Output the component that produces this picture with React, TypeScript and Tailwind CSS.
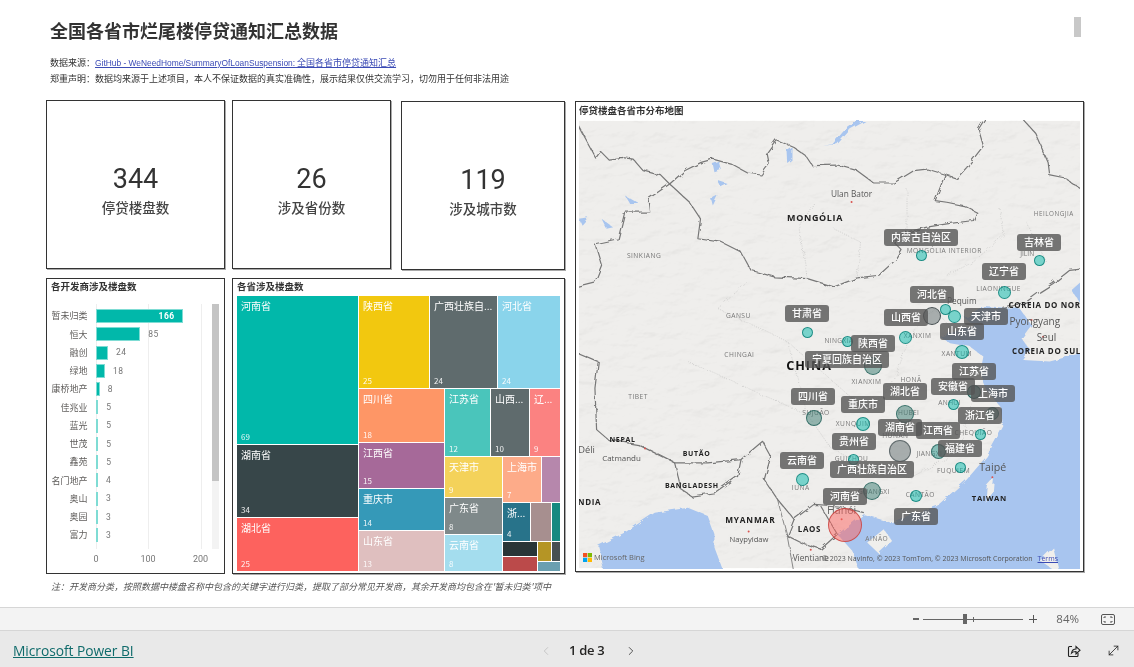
import React from "react";
import { ChevronLeft, ChevronRight, MoveDiagonal } from "lucide-react";

const FONT = "font-['Noto_Sans_CJK_SC','Noto_Sans',sans-serif]";

const bars: [string, number][] = [
  ["暂未归类", 166], ["恒大", 85], ["融创", 24], ["绿地", 18], ["康桥地产", 8], ["佳兆业", 5], ["蓝光", 5],
  ["世茂", 5], ["鑫苑", 5], ["名门地产", 4], ["奥山", 3], ["奥园", 3], ["富力", 3],
];

function Stat({ value, label, className }: { value: string; label: string; className: string }) {
  return (
    <div className={`${className} h-[169px] border border-[#333] shadow-[1px_1px_0_#aaa] flex flex-col items-center justify-center pt-[10px]`}>
      <div className="font-['Roboto',sans-serif] text-[27px] leading-[34px] text-[#333]">{value}</div>
      <div className="text-[13.5px] leading-[22px] font-medium text-[#444]">{label}</div>
    </div>
  );
}

function Cell({ bg, name, value, className = "" }: { bg: string; name?: string; value?: number; className?: string }) {
  return (
    <div className={`${bg} ${className} min-w-0 min-h-0 flex flex-col justify-between pl-[4px] pr-[2px] pt-[3px] pb-[2px] overflow-hidden text-white`}>
      {name && <div className="text-[10px] leading-[14px] whitespace-nowrap">{name}</div>}
      {value !== undefined && <div className="text-[8px] leading-[11px] opacity-90">{value}</div>}
    </div>
  );
}

function Treemap() {
  return (
    <div className="mx-[4px] mt-[3px] h-[275px] flex gap-px">
      <div className="w-[121px] flex flex-col gap-px">
        <Cell bg="bg-[#01b8aa]" name="河南省" value={69} className="h-[148px]" />
        <Cell bg="bg-[#374649]" name="湖南省" value={34} className="h-[72px]" />
        <Cell bg="bg-[#fd625e]" name="湖北省" value={25} className="flex-1" />
      </div>
      <div className="flex-1 flex flex-col gap-px">
        <div className="h-[92px] flex gap-px">
          <Cell bg="bg-[#f2c80f]" name="陕西省" value={25} className="w-[70px]" />
          <Cell bg="bg-[#5f6b6d]" name="广西壮族自..." value={24} className="w-[67px]" />
          <Cell bg="bg-[#8ad4eb]" name="河北省" value={24} className="flex-1" />
        </div>
        <div className="flex-1 flex gap-px min-h-0">
          <div className="w-[85px] flex flex-col gap-px">
            <Cell bg="bg-[#fe9666]" name="四川省" value={18} className="h-[53px]" />
            <Cell bg="bg-[#a66999]" name="江西省" value={15} className="h-[45px]" />
            <Cell bg="bg-[#3599b8]" name="重庆市" value={14} className="h-[41px]" />
            <Cell bg="bg-[#dfbfbf]" name="山东省" value={13} className="flex-1" />
          </div>
          <div className="flex-1 flex flex-col gap-px">
            <div className="h-[67px] flex gap-px">
              <Cell bg="bg-[#4ac5bb]" name="江苏省" value={12} className="w-[45px]" />
              <Cell bg="bg-[#5f6b6d]" name="山西..." value={10} className="w-[38px]" />
              <Cell bg="bg-[#fb8281]" name="辽..." value={9} className="flex-1" />
            </div>
            <div className="flex-1 flex gap-px min-h-0">
              <div className="w-[57px] flex flex-col gap-px">
                <Cell bg="bg-[#f4d25a]" name="天津市" value={9} className="h-[40px]" />
                <Cell bg="bg-[#7f898a]" name="广东省" value={8} className="h-[36px]" />
                <Cell bg="bg-[#a4ddee]" name="云南省" value={8} className="flex-1" />
              </div>
              <div className="flex-1 flex flex-col gap-px">
                <div className="h-[45px] flex gap-px">
                  <Cell bg="bg-[#fdab89]" name="上海市" value={7} className="w-[38px]" />
                  <Cell bg="bg-[#b687ac]" className="flex-1" />
                </div>
                <div className="h-[38px] flex gap-px">
                  <Cell bg="bg-[#28738a]" name="浙..." value={4} className="w-[27px]" />
                  <Cell bg="bg-[#a78f8f]" className="w-[20px]" />
                  <Cell bg="bg-[#168980]" className="flex-1" />
                </div>
                <div className="flex-1 flex gap-px">
                  <div className="w-[34px] flex flex-col gap-px">
                    <Cell bg="bg-[#293537]" className="flex-1" />
                    <Cell bg="bg-[#bb4a4a]" className="flex-1" />
                  </div>
                  <div className="flex-1 flex flex-col gap-px">
                    <div className="h-[19px] flex gap-px">
                      <Cell bg="bg-[#b59525]" className="w-[13px]" />
                      <Cell bg="bg-[#475052]" className="flex-1" />
                    </div>
                    <Cell bg="bg-[#6a9fb0]" className="flex-1" />
                  </div>
                </div>
              </div>
            </div>
          </div>
        </div>
      </div>
    </div>
  );
}

function BarChart() {
  return (
    <div className="relative h-[245px] mt-[11px]">
      {[44.5, 97, 149.5].map((x) => (
        <div key={x} className="absolute top-0 bottom-0 w-px bg-[#eeeeee]" style={{ left: x }} />
      ))}
      <div className="absolute left-[161px] top-0 bottom-0 w-[7px] bg-[#f3f3f3]">
        <div className="h-[177px] bg-[#c4c4c4]" />
      </div>
      <div className="relative pt-[3px]">
        {bars.map(([name, v]) => (
          <div key={name} className="h-[18.25px] flex items-center">
            <div className="w-[36.5px] text-[9px] text-[#605e5c] whitespace-nowrap shrink-0 flex justify-end">{name}</div>
            <div className="ml-[8px] flex items-center">
              <div
                className="h-[14px] bg-[#01b8aa] border border-[#7fdcd4] flex items-center justify-end shrink-0"
                style={{ width: Math.max(2.5, v * 0.525) }}
              >
                {v > 100 && <span className="text-white font-bold text-[8.5px] pr-[7px] tracking-[0.5px] font-['Roboto',sans-serif]">{v}</span>}
              </div>
              {v <= 100 && <span className="ml-[8px] text-[#777] text-[8.5px] tracking-[0.5px] font-['Roboto',sans-serif]">{v}</span>}
            </div>
          </div>
        ))}
      </div>
      <div className="absolute left-0 right-0 top-[249px] text-[9px] text-[#777] font-['Roboto',sans-serif]">
        {[["0", 45], ["100", 97], ["200", 149.5]].map(([t, x]) => (
          <span key={t as string} className="absolute -translate-x-1/2" style={{ left: x as number }}>{t}</span>
        ))}
      </div>
    </div>
  );
}

const pins: [string, number, number, number][] = [
  ["内蒙古自治区", 921, 237, 74], ["吉林省", 1039, 242, 44], ["辽宁省", 1004, 271, 44], ["河北省", 932, 294, 44],
  ["甘肃省", 807, 313, 44], ["山西省", 906, 317, 44], ["天津市", 986, 316, 44], ["山东省", 962, 331, 44],
  ["陕西省", 873, 343, 44], ["宁夏回族自治区", 847, 359, 84], ["江苏省", 974, 371, 44], ["安徽省", 953, 386, 44],
  ["湖北省", 905, 391, 44], ["四川省", 813, 396, 44], ["上海市", 993, 393, 44], ["重庆市", 863, 404, 44],
  ["浙江省", 980, 415, 44], ["湖南省", 900, 427, 44], ["江西省", 938, 430, 44], ["贵州省", 854, 441, 44],
  ["福建省", 960, 448, 44], ["云南省", 802, 460, 44], ["广西壮族自治区", 872, 469, 84], ["河南省", 845, 496, 44],
  ["广东省", 916, 516, 44],
];

const T = "#01b8aa";
const TS = "#067d74";
const G = "#38796f";
const GS = "#1f5f58";
const bubbles: [number, number, number, string, string][] = [
  [921, 255, 5.5, T, TS], [1039, 260, 5.5, T, TS], [1004, 292, 6.5, T, TS],
  [932, 316, 9, "#5f6b6d", "#2f3a3c"], [945, 309, 5.5, T, TS], [954, 316, 6.5, T, TS],
  [807, 332, 5.5, T, TS], [905, 337, 6.5, T, TS], [847, 341, 5.5, T, TS],
  [962, 352, 7, T, TS], [873, 366, 9, G, GS], [974, 392, 7, "#0a5d56", "#0a4a44"],
  [953, 404, 5.5, T, TS], [992, 413, 6.5, "#0a5d56", "#0a4a44"], [905, 414, 9, G, GS],
  [814, 418, 8, G, GS], [863, 424, 7, T, TS], [980, 434, 5.5, T, TS],
  [900, 451, 11, "#5f6b6d", "#4f5a5c"], [938, 451, 7.5, "#1f8f85", GS], [853, 459, 5.5, T, TS],
  [960, 467, 5.5, T, TS], [802, 479, 6.5, T, TS], [872, 491, 9, G, GS],
  [916, 496, 6, T, TS], [845, 525, 17, "#fd625e", "#c8403c"],
];

const mapTexts: [string, number, number, number, string, boolean?, number?][] = [
  ["Ulan Bator", 833, 303, 25, "#555"], ["MONGÓLIA", 723, 378, 27, "#222", true, 2], ["HEILONGJIA", 1442, 361, 19, "#777", false, 1.5],
  ["SINKIANG", 208, 488, 20, "#777", false, 1.5], ["MONGÓLIA INTERIOR", 1112, 472, 20, "#777", false, 1.5], ["JILIN", 1362, 481, 20, "#777"],
  ["LIAONINGUE", 1276, 586, 20, "#777", false, 1.5], ["Pequim", 1165, 627, 25, "#555"], ["COREIA DO NORTE", 1430, 640, 24, "#222", true, 2],
  ["Pyongyang", 1385, 690, 30, "#555"], ["Seul", 1420, 738, 30, "#555"], ["COREIA DO SUL", 1420, 777, 24, "#222", true, 2],
  ["GANSU", 492, 670, 20, "#777", false, 1.5], ["XANXIM", 1032, 730, 20, "#777", false, 1.5], ["NINGXIA", 795, 745, 20, "#777", false, 1],
  ["XANTUM", 1150, 783, 20, "#777", false, 1.5], ["CHINGAI", 495, 786, 20, "#777", false, 1.5], ["CHINA", 705, 825, 38, "#111", true, 3],
  ["XIANXIM", 878, 868, 20, "#777", false, 1.5], ["HONÃ", 1012, 862, 20, "#777", false, 1.5], ["TIBET", 190, 912, 20, "#777", false, 1.5],
  ["SUJUÃO", 726, 962, 20, "#777", false, 1.5], ["ANHUI", 1128, 930, 20, "#777", false, 1], ["HUBEI", 1005, 960, 20, "#777", false, 1],
  ["XUNQUIM", 838, 993, 20, "#777", false, 1.5], ["HUNAN", 965, 1030, 20, "#777", false, 1.5], ["CHEQUIÃO", 1200, 1020, 20, "#777", false, 1.5],
  ["Déli", 35, 1075, 28, "#555"], ["NEPAL", 143, 1043, 21, "#222", true, 2], ["Catmandu", 140, 1100, 24, "#555"], ["BUTÃO", 366, 1083, 21, "#222", true, 2],
  ["GUIZHOU", 833, 1098, 20, "#777", false, 1.5], ["JIANGXI", 1067, 1083, 20, "#777", false, 1], ["FUQUIEM", 1140, 1135, 20, "#777", false, 1.5],
  ["Taipé", 1258, 1130, 32, "#555"], ["BANGLADESH", 352, 1180, 21, "#222", true, 2], ["TAIWAN", 1248, 1220, 23, "#222", true, 2],
  ["IUNÃ", 680, 1186, 20, "#777", false, 1.5], ["GUANGXI", 900, 1200, 20, "#777", false, 1], ["CANTÃO", 1040, 1207, 20, "#777", false, 1.5],
  ["NDIA", 44, 1231, 24, "#222", true, 2], ["Hanói", 803, 1258, 32, "#666"], ["MYANMAR", 528, 1287, 25, "#222", true, 2.5],
  ["LAOS", 706, 1313, 24, "#222", true, 2], ["AINÃO", 909, 1340, 20, "#777", false, 1.5], ["Naypyidaw", 524, 1344, 23, "#555"],
  ["Vientiane", 710, 1402, 25, "#555"],
];

function MapArt() {
  return (
    <svg viewBox="12 75 1509 1347" className="absolute inset-0 w-full h-full" fontFamily="'Open Sans',sans-serif">
      <defs>
        <filter id="relief" x="0" y="0" width="100%" height="100%">
          <feTurbulence type="fractalNoise" baseFrequency="0.012 0.022" numOctaves="6" seed="11" />
          <feDiffuseLighting surfaceScale="5" lightingColor="#ffffff" diffuseConstant="1.1">
            <feDistantLight azimuth="235" elevation="65" />
          </feDiffuseLighting>
        </filter>
        <filter id="rough" x="-5%" y="-5%" width="110%" height="110%">
          <feTurbulence type="fractalNoise" baseFrequency="0.035" numOctaves="3" seed="4" result="n" />
          <feDisplacementMap in="SourceGraphic" in2="n" scale="16" />
        </filter>
      </defs>
      <rect x="12" y="75" width="1509" height="1347" fill="#efeeec" />
      <rect x="12" y="75" width="1509" height="1347" filter="url(#relief)" opacity="0.4" style={{ mixBlendMode: "multiply" }} />
      <g filter="url(#rough)">
        <path fill="#a8c5ef" d="M1195,655 L1225,635 L1290,640 L1340,640 L1375,690 L1345,730 L1372,765 L1350,795 L1430,800 L1540,770 L1540,1440 L860,1440 L835,1370 L790,1320 L870,1260 L950,1285 L1000,1265 L1090,1235 L1180,1155 L1240,1085 L1290,995 L1280,935 L1240,885 L1220,835 L1230,785 L1190,755 L1130,745 L1100,725 L1200,690 L1170,665 Z" />
        <path fill="#a8c5ef" d="M1540,545 L1495,585 L1540,650 Z" />
        <path fill="#a8c5ef" d="M90,1440 L70,1355 L150,1315 L240,1255 L340,1240 L400,1265 L420,1320 L420,1360 L450,1440 Z" />
        <path fill="#f0efec" d="M880,1345 L930,1305 L955,1340 L915,1378 Z" />
        <path fill="#f0efec" d="M1240,1175 L1262,1150 L1258,1195 L1236,1225 Z" />
        <path fill="#f0efec" d="M1400,1400 L1440,1360 L1460,1440 Z" />
        <path fill="#a8c5ef" d="M745,150 L790,145 L830,100 L875,75 L850,75 L810,105 L775,145 Z" />
        <path fill="#a8c5ef" d="M640,165 L655,155 L655,195 L642,205 Z M415,205 L435,198 L442,222 L420,230 Z M430,255 L460,265 L440,275 Z M150,300 L195,325 L165,325 Z M80,370 L115,395 L95,400 Z M12,370 L40,365 L20,388 Z M410,310 L430,300 L415,330 Z" />
        <g fill="none" stroke="#777777" strokeWidth="3.6" strokeLinejoin="round">
          <path d="M285,265 L330,225 L380,200 L415,190 L470,205 L520,232 L560,238 L585,205 L578,170 L605,132 L660,155 L695,180 L715,210 L790,208 L850,225 L900,262 L960,262 L1020,225 L1060,220 L1110,235 L1150,248 L1180,215 L1230,150 L1215,100 L1240,60" />
          <path d="M285,265 L345,320 L378,370 L370,430 L440,440 L500,470 L530,525 L600,545 L700,550 L780,575 L850,548 L915,540 L970,490 L985,465 L960,440 L1000,410 L1060,395 L1120,385 L1200,375 L1210,350 L1170,330 L1120,320 L1085,315 L1115,235" />
          <path d="M1340,60 L1385,110 L1425,200 L1430,240 L1480,250 L1540,290" />
          <path d="M1540,520 L1490,525 L1440,565 L1400,590 L1360,620 L1290,640" />
          <path d="M0,70 L65,190 L80,170 L100,190 L140,185 L175,190 L205,225 L260,240 L285,265 L220,310 L225,350 L150,350 L130,430 L60,445 L80,510 L60,560 L0,575" />
          <path d="M0,770 L70,800 L60,880 L65,1005 L100,1035 L190,1050 L240,1075 L300,1105 L400,1105 L500,1095 L565,1040 L590,1085 L570,1155 L610,1215 L660,1275 L720,1230 L790,1235 L870,1255" />
          <path d="M300,1105 L320,1185 L350,1205 L420,1195 L490,1145 L500,1095" />
          <path d="M660,1275 L640,1325 L680,1345 L740,1365 L790,1320 L740,1235" />
          <path d="M610,1215 L640,1330 L660,1440" strokeWidth="2.6" />
        </g>
        <g fill="none" stroke="#b5b5b5" strokeWidth="1.6" strokeDasharray="3 4">
          <path d="M700,550 L675,400 L720,320 M850,548 L860,440 L780,400 M1000,410 L1000,280 M1120,540 L1200,500 L1290,420 L1280,340 M1420,500 L1360,380 M1170,740 L1080,640 L1010,720 L960,860 L880,950 L800,880 L640,740 L430,640 L520,560 M640,740 L700,960 L770,1060 L880,1120 L1010,1150 L1160,1070 L1190,920 M340,800 L520,880 L700,960" />
        </g>
      </g>
      <g fill="#d9534f"><circle cx="833" cy="319" r="3" /><circle cx="1375" cy="675" r="3" /><circle cx="1410" cy="725" r="3" /><circle cx="211" cy="1062" r="3" /><circle cx="523" cy="1312" r="3" /><circle cx="710" cy="1367" r="3" /><circle cx="1257" cy="1148" r="3" /><circle cx="803" cy="1275" r="3" /></g>
      {mapTexts.map(([t, x, y, s, c, b, ls]) => (
        <text key={t} x={x} y={y} fontSize={s} fill={c} fontWeight={b ? 700 : 400} letterSpacing={ls ?? 0} textAnchor="middle">{t}</text>
      ))}
    </svg>
  );
}

function MapVisual() {
  const ox = 579;
  const oy = 120;
  return (
    <div className="relative flex-1 mx-[3px] mb-[2px] overflow-hidden">
      <MapArt />
      {bubbles.map(([x, y, r, c, s], i) => (
        <div
          key={i}
          className="absolute rounded-full border"
          style={{ left: x - r - ox, top: y - r - oy, width: r * 2, height: r * 2, backgroundColor: c + "80", borderColor: s + "cc" }}
        />
      ))}
      {pins.map(([t, x, y, w]) => (
        <div
          key={t}
          className="absolute h-[17px] rounded-[3px] bg-[#555555]/80 text-white text-[10px] font-medium leading-[16px] text-center whitespace-nowrap"
          style={{ left: x - w / 2 - ox, top: y - 8.5 - oy, width: w }}
        >
          {t}
        </div>
      ))}
      <div className="absolute left-[4px] bottom-[6px] flex items-center gap-[2px] text-[7.5px] text-[#666]">
        <svg width="9" height="9" viewBox="0 0 9 9">
          <rect width="4.2" height="4.2" fill="#f25022" />
          <rect x="4.8" width="4.2" height="4.2" fill="#7fba00" />
          <rect y="4.8" width="4.2" height="4.2" fill="#00a4ef" />
          <rect x="4.8" y="4.8" width="4.2" height="4.2" fill="#ffb900" />
        </svg>
        <span className="font-['Open_Sans',sans-serif]">Microsoft Bing</span>
      </div>
      <div className="absolute right-[22px] bottom-[5px] flex gap-[5px] text-[7px] text-[#555] font-['Open_Sans',sans-serif] whitespace-nowrap">
        <span>© 2023 NavInfo, © 2023 TomTom, © 2023 Microsoft Corporation</span>
        <span className="underline text-[#3b4bb5]">Terms</span>
      </div>
    </div>
  );
}

export default function App() {
  return (
    <div className={`${FONT} w-[1134px] h-[667px] overflow-hidden bg-white flex flex-col`}>
      <div className="h-[607px] px-[46px] flex flex-col">
        <div className="h-[100px] pl-[4px] pt-[17px] flex justify-between shrink-0">
          <div>
            <div className="text-[18px] leading-[26px] font-bold text-[#333]">全国各省市烂尾楼停贷通知汇总数据</div>
            <div className="mt-[12px] text-[9px] leading-[16px] text-[#333]">
              数据来源：<span className="underline text-[#3b4bb5]"><span className="font-['Liberation_Sans',sans-serif] text-[8.4px]">GitHub - WeNeedHome/SummaryOfLoanSuspension:</span> 全国各省市停贷通知汇总</span>
            </div>
            <div className="text-[9px] leading-[16px] text-[#333]">郑重声明：数据均来源于上述项目，本人不保证数据的真实准确性，展示结果仅供交流学习，切勿用于任何非法用途</div>
          </div>
          <div className="w-[7px] h-[20px] bg-[#c8c8c8] mr-[7px]" />
        </div>
        <div className="flex gap-[10px]">
          <div className="w-[519px] flex flex-col">
            <div className="flex">
              <Stat value="344" label="停贷楼盘数" className="w-[179px]" />
              <Stat value="26" label="涉及省份数" className="w-[159px] ml-[7px]" />
              <Stat value="119" label="涉及城市数" className="w-[164px] ml-[10px] mt-px" />
            </div>
            <div className="flex mt-[8px]">
              <div className="w-[179px] h-[296px] border border-[#333] pl-[4px]">
                <div className="text-[9.5px] leading-[13px] font-bold text-[#333] pt-[1px]">各开发商涉及楼盘数</div>
                <BarChart />
              </div>
              <div className="w-[333px] h-[296px] ml-[7px] border border-[#333] shadow-[1px_1px_0_#aaa]">
                <div className="text-[9.5px] leading-[13px] font-bold text-[#333] pt-[1px] pl-[4px]">各省涉及楼盘数</div>
                <Treemap />
              </div>
            </div>
            <div className="pl-[5px] mt-[6px] text-[9px] leading-[13px] italic text-[#555] whitespace-nowrap">注：开发商分类，按照数据中楼盘名称中包含的关键字进行归类，提取了部分常见开发商，其余开发商均包含在'暂未归类'项中</div>
          </div>
          <div className="w-[509px] h-[471px] mt-px border border-[#333] shadow-[1px_1px_0_#aaa] flex flex-col">
            <div className="h-[18px] shrink-0 pl-[3px] text-[9.5px] leading-[16px] font-bold text-[#333]">停贷楼盘各省市分布地图</div>
            <MapVisual />
          </div>
        </div>
      </div>
      <div className="h-[24px] bg-[#f3f3f3] border-y border-y-[#d6d6d6] flex items-center justify-end text-[#555]">
        <span className="w-[6px] h-[2px] bg-[#666] mr-[4px]" />
        <div className="relative w-[100px] h-px bg-[#666] flex items-center">
          <div className="absolute left-[40px] w-[4px] h-[10px] bg-[#666]" />
          <div className="absolute left-[50px] w-px h-[5px] bg-[#666]" />
        </div>
        <span className="relative ml-[6px] w-[8px] h-[8px] flex items-center justify-center">
          <span className="absolute w-[8px] h-px bg-[#555]" />
          <span className="absolute w-px h-[8px] bg-[#555]" />
        </span>
        <span className="ml-[19px] text-[11.5px] font-['Open_Sans',sans-serif] text-[#666]">84%</span>
        <svg className="ml-[22px] mr-[19px]" width="14" height="11" viewBox="0 0 14 11" fill="none" stroke="#555" strokeWidth="1">
          <rect x="0.5" y="0.5" width="13" height="10" rx="1.5" />
          <path d="M3 4V3H5M9 3H11V4M11 7V8H9M5 8H3V7" />
        </svg>
      </div>
      <div className="flex-1 bg-[#e9e9e9] flex items-center pl-[13px] pr-[13px] pt-[3px] text-[#252423]">
        <span className="w-[526px] shrink-0 text-[13.8px] leading-[18px] underline text-[#0f6b6b] font-['Open_Sans',sans-serif] tracking-[-0.05px]">Microsoft Power BI</span>
        <ChevronLeft className="w-[14px] h-[14px] text-[#b8b8b8] shrink-0" strokeWidth={1.2} />
        <span className="ml-[16px] w-[37px] text-[13px] font-semibold font-['Open_Sans',sans-serif] whitespace-nowrap tracking-[-0.3px]">1 de 3</span>
        <ChevronRight className="ml-[18px] w-[14px] h-[14px] text-[#333] shrink-0" strokeWidth={1.4} />
        <div className="flex-1" />
        <svg width="14" height="14" viewBox="0 0 14 14" fill="none" stroke="#222" strokeWidth="1.1">
          <path d="M5 2.5H2.5a1 1 0 0 0-1 1V11.5a1 1 0 0 0 1 1H10a1 1 0 0 0 1-1V9" />
          <path d="M4.5 9C5 6.5 6.5 5 9 5V2.5l4 3.7-4 3.7V7.5C7 7.5 5.5 8 4.5 9Z" />
        </svg>
        <MoveDiagonal className="ml-[25px] w-[15px] h-[15px] text-[#222] shrink-0" strokeWidth={1.3} />
      </div>
    </div>
  );
}
